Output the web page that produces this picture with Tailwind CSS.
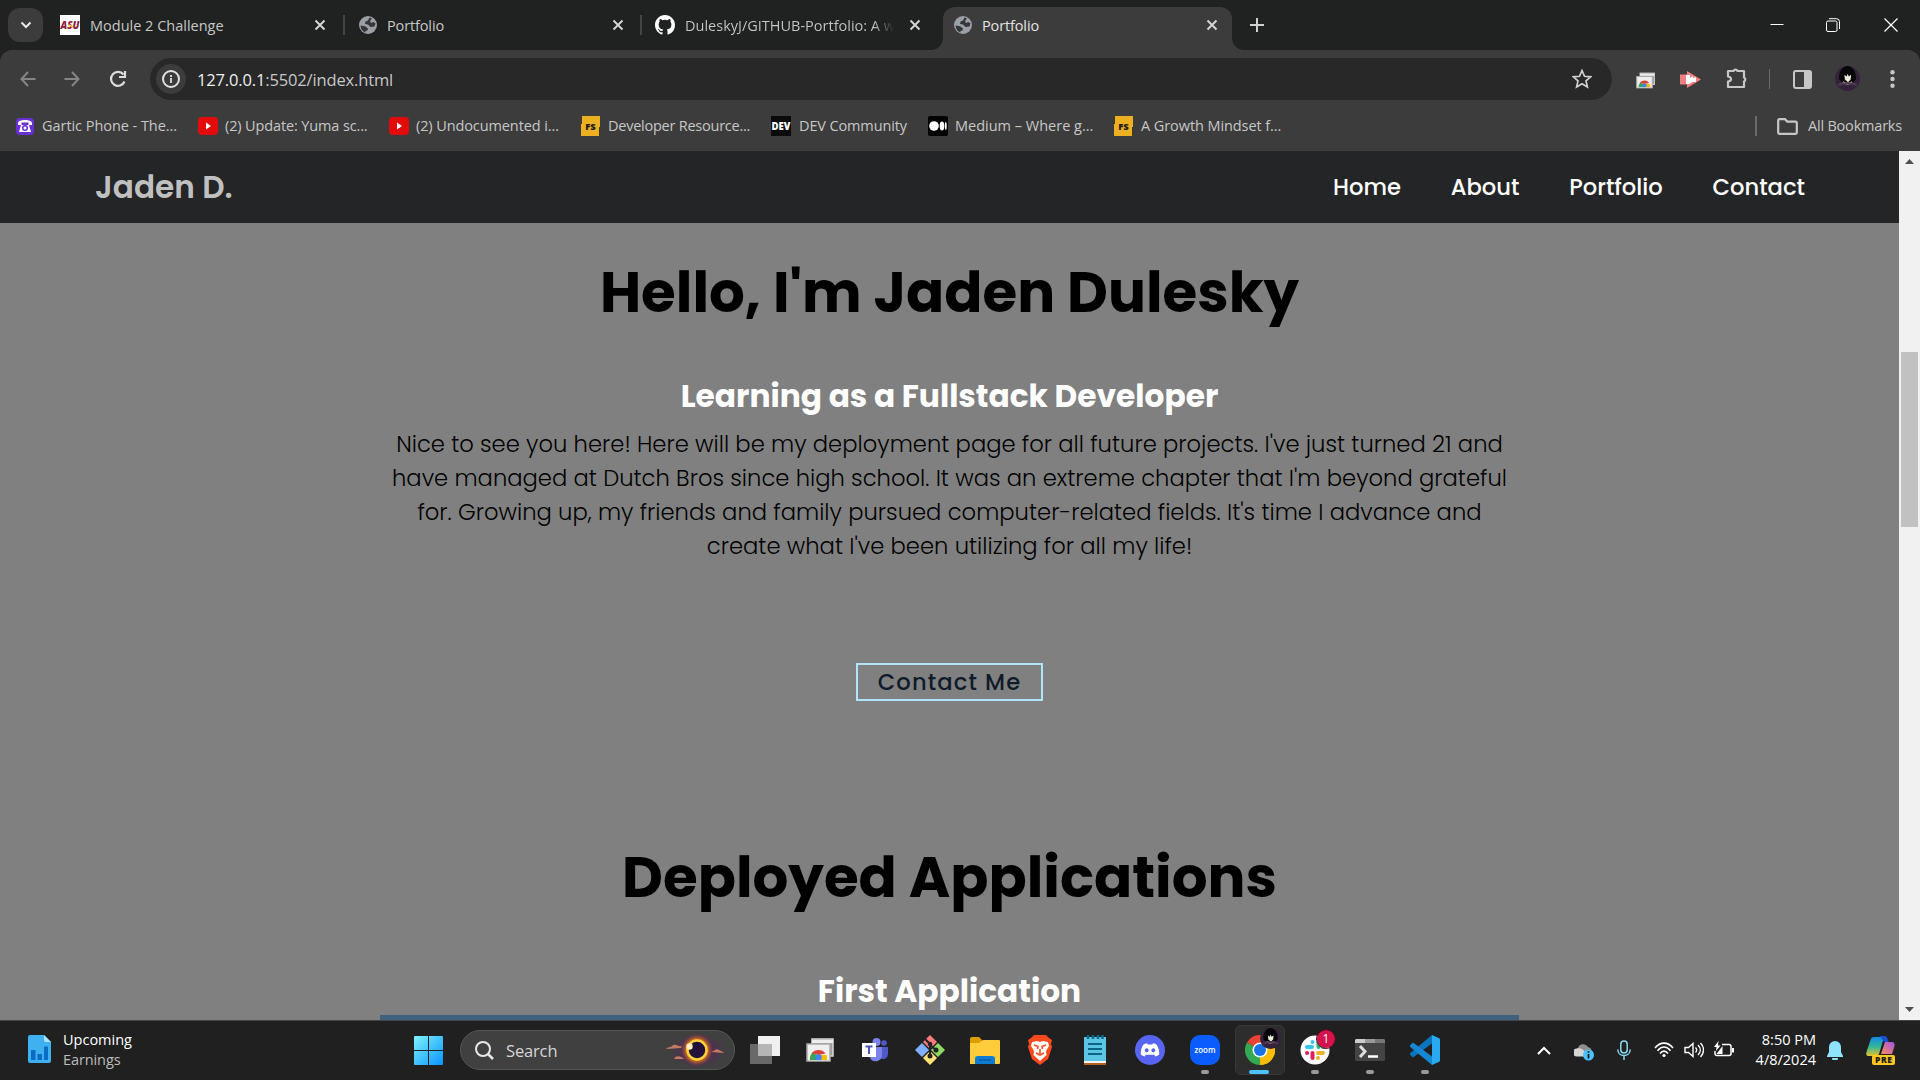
<!DOCTYPE html>
<html lang="en">
<head>
<meta charset="utf-8">
<title>Portfolio</title>
<script src="https://cdn.jsdelivr.net/npm/@tailwindcss/browser@4"></script>
</head>
<body class="w-[1920px] h-[1080px] overflow-hidden flex flex-col bg-[#202221] font-['Segoe_UI','Open_Sans',sans-serif] text-[14.5px] text-[#c7c7c7] whitespace-nowrap">
<svg class="absolute w-0 h-0">
  <defs>
    <linearGradient id="win" gradientUnits="userSpaceOnUse" x1="0" y1="0" x2="29" y2="29"><stop offset="0" stop-color="#7df3ff"/><stop offset="1" stop-color="#0a93ff"/></linearGradient>
    <symbol id="x" viewBox="0 0 12 12"><path d="M1.500 1.500l9 9m0-9l-9 9" stroke="#d6d6d6" stroke-width="1.900" fill="none"/></symbol>
    <symbol id="globe" viewBox="0 0 18 18"><circle cx="9" cy="9" r="9" fill="#9aa0a6"/><path d="M10.500 1.500L9 4.500 6.500 5.500 6 8l3 .5 2.500 2.500 4-.5 1-3-2-1.500L12 7l-1-2 2-2.500zM1.600 9.500l4.400.8 3 2.200-.5 2-2 .5v1.500C3.500 15.500 1.600 13 1.600 9.500z" fill="#35373a"/></symbol>
    <symbol id="yt" viewBox="0 0 20 18"><rect width="20" height="18" rx="4" fill="#e20a0a"/><path d="M8 5.500l5 3.500-5 3.500z" fill="#fff"/></symbol>
    <symbol id="fs" viewBox="0 0 19 20"><path d="M0 0h19v20H0z" fill="#eeb023"/><path d="M.3 0v8M18.700 11v9" stroke="#1b1b1b"/><text x="9.500" y="13.500" font-family="Open Sans" font-weight="800" font-size="9.500" text-anchor="middle" fill="#1b1b1b">FS</text></symbol>
    <symbol id="avatar" viewBox="0 0 24 24"><circle cx="12" cy="12" r="12" fill="#33223a"/><path d="M4 13C3 5 8 0 12 0s9 5 8 13l-3 3H8z" fill="#060508"/><path d="M9 8.500l2.200 1.500 1-2.500 1 2.500 2.300-1.500-.5 4.500-2.500 2.500-3-2.500z" fill="#f0ecdb"/><path d="M7.500 15.500c3 2 6 2 9 0" stroke="#a19a7d" stroke-width="1.800" fill="none"/><path d="M3 18c5-2 13-2 18 0" stroke="#533a5a" stroke-width="2" fill="none"/></symbol>
    <symbol id="chrome" viewBox="0 0 30 30"><path d="M15 15L2 7.500A15 15 0 0 1 28 7.500z" fill="#ea4335"/><path d="M15 15l13-7.500A15 15 0 0 1 15 30z" fill="#fbbc04"/><path d="M15 15v15A15 15 0 0 1 2 7.500z" fill="#34a853"/><path d="M15 7.500h13A15 15 0 0 1 15 30l6.500-11.200z" fill="#fbbc04"/><circle cx="15" cy="15" r="7.500" fill="#fff"/><circle cx="15" cy="15" r="6" fill="#1a73e8"/></symbol>
    <symbol id="windows" viewBox="0 0 28 24"><path d="M6 1h21v17H6z" fill="#9a9a9a" stroke="#d9d9d9" stroke-width="1.500"/><path d="M6 2h21v3H6z" fill="#eee"/><path d="M1 6h23v17H1z" fill="#efefef" stroke="#aaa" stroke-width="1.500"/><path d="M4 22a9 9 0 0 1 2.500-7.500L12 18v4z" fill="#34a853"/><path d="M5.500 15.500a8.600 8.600 0 0 1 14 0l-7 1.500z" fill="#db4437"/><path d="M12 22v-5h8.500a9 9 0 0 1 .5 5z" fill="#fbbc04"/><circle cx="12.500" cy="19.500" r="3.200" fill="#4285f4"/><path d="M2 22h22v1H2z" fill="#ccc"/></symbol>
  </defs>
</svg>

<!-- Tab strip -->
<header class="h-[50px] shrink-0 flex items-end">
  <div class="w-[943px] h-[50px] flex items-center pl-2">
    <button class="w-[35px] h-[34px] rounded-xl bg-[#3c3c3c] flex items-center justify-center"><svg width="12" height="8" viewBox="0 0 12 8"><path d="M1.500 1.500L6 6l4.500-4.500" stroke="#e8e8e8" stroke-width="2" fill="none"/></svg></button>
    <div class="ml-[17px] w-[284px] flex items-center">
      <svg width="20" height="20" viewBox="0 0 20 20"><path d="M0 0h20v20H0z" fill="#fff"/><text x="10" y="14" font-family="Open Sans" font-weight="800" font-style="italic" font-size="10.500" textLength="19" lengthAdjust="spacingAndGlyphs" text-anchor="middle" fill="#8c1d40">ASU</text><path d="M9 10l4 2" stroke="#ffc627" stroke-width="1.500"/></svg>
      <span class="ml-[10px] w-[224px] pt-0.5">Module 2 Challenge</span>
      <svg width="12" height="12"><use href="#x"/></svg>
    </div>
    <div class="w-0.5 h-5 bg-[#454545] -ml-px"></div>
    <div class="ml-[14px] w-[283px] flex items-center">
      <svg width="18" height="18"><use href="#globe"/></svg>
      <span class="ml-[10px] w-[225px] pt-0.5 tracking-[-0.13px]">Portfolio</span>
      <svg width="12" height="12"><use href="#x"/></svg>
    </div>
    <div class="w-0.5 h-5 bg-[#454545] -ml-0.5"></div>
    <div class="ml-[13px] flex items-center">
      <svg width="20" height="20" viewBox="0 0 16 16"><path fill="#fff" d="M8 0C3.580 0 0 3.580 0 8c0 3.540 2.290 6.530 5.470 7.590.4.070.55-.17.55-.38 0-.19-.01-.82-.01-1.490-2.010.37-2.530-.49-2.690-.94-.09-.23-.48-.94-.82-1.130-.28-.15-.68-.52-.01-.53.63-.01 1.080.58 1.230.82.72 1.210 1.870.87 2.330.66.070-.52.28-.87.51-1.070-1.780-.2-3.640-.89-3.640-3.950 0-.87.31-1.590.82-2.150-.08-.2-.36-1.020.08-2.120 0 0 .67-.21 2.200.82a7.600 7.600 0 0 1 4 0c1.530-1.040 2.200-.82 2.200-.82.44 1.100.16 1.920.08 2.120.51.56.82 1.270.82 2.150 0 3.070-1.870 3.750-3.650 3.950.29.25.54.73.54 1.480 0 1.070-.01 1.930-.01 2.200 0 .21.15.46.55.38A8 8 0 0 0 16 8c0-4.420-3.580-8-8-8z"/></svg>
      <span class="ml-[10px] mr-[15px] w-[209px] pt-0.5 overflow-hidden bg-linear-to-r from-[#c7c7c7] from-90% to-transparent bg-clip-text text-transparent">DuleskyJ/GITHUB-Portfolio: A w</span>
      <svg width="12" height="12"><use href="#x"/></svg>
    </div>
  </div>
  <div class="relative w-[289px] h-[43px] rounded-t-xl bg-[#3c3c3c] flex items-center pl-[11px] pb-[7px]">
    <svg class="absolute -left-3 bottom-0" width="12" height="12"><path d="M12 0v12H0A12 12 0 0 0 12 0z" fill="#3c3c3c"/></svg>
    <svg class="absolute -right-3 bottom-0" width="12" height="12"><path d="M0 0v12h12A12 12 0 0 1 0 0z" fill="#3c3c3c"/></svg>
    <svg width="18" height="18"><use href="#globe"/></svg>
    <span class="ml-[10px] w-[224px] pt-0.5 tracking-[-0.13px] text-[#e3e3e3]">Portfolio</span>
    <svg width="12" height="12"><use href="#x"/></svg>
  </div>
  <div class="h-[50px] flex-1 flex items-center pl-[18px]">
    <svg width="14" height="14"><path d="M7 0v14M0 7h14" stroke="#d0d0d0" stroke-width="2"/></svg>
    <svg class="ml-auto" width="14" height="14"><path d="M.5 6.500h13" stroke="#fff"/></svg>
    <svg class="ml-[42px]" width="14" height="14" fill="none" stroke="#fff"><rect x=".5" y="3" width="10.500" height="10.500" rx="1.500"/><path d="M3 .7h7.500a3 3 0 0 1 3 3V11"/></svg>
    <svg class="ml-[44px] mr-[22px]" width="14" height="14"><path d="M.5.5l13 13m0-13l-13 13" stroke="#fff" stroke-width="1.200"/></svg>
  </div>
</header>

<!-- Toolbar -->
<div class="h-[101px] shrink-0 bg-[#3c3c3c] rounded-t-xl">
  <div class="h-[58px] flex items-center">
    <svg class="ml-[20px]" width="16" height="16" fill="none" stroke="#858585" stroke-width="2"><path d="M15.500 8H1.500M8 1L1.500 8 8 15"/></svg>
    <svg class="ml-[28px]" width="16" height="16" fill="none" stroke="#858585" stroke-width="2"><path d="M.5 8h14M8 1l6.500 7L8 15"/></svg>
    <svg class="ml-[29px] mr-[-1px]" width="18" height="18" fill="none" stroke="#dcdcdc" stroke-width="2.200"><path d="M15.500 11.500A7 7 0 1 1 14.500 4.500M16 1v6h-6"/></svg>
    <div class="ml-[24px] w-[1462px] h-[42px] rounded-full bg-[#282828] flex items-center pl-[6px] pr-[20px]">
      <span class="w-[30px] h-[30px] rounded-full bg-[#3c3c3c] flex items-center justify-center"><svg width="18" height="18" fill="none" stroke="#e3e3e3" stroke-width="2"><circle cx="9" cy="9" r="8"/><path d="M9 8v5M9 5v2" stroke-width="1.800"/></svg></span>
      <span class="ml-[11px] pt-[3px] text-[16.5px] tracking-[-0.15px]"><span class="text-[#eee]">127.0.0.1</span>:5502/index.html</span>
      <svg class="ml-auto" width="20" height="20" viewBox="0 0 20 20"><path d="M10 1.500l2.500 5.800 6.200.5-4.700 4.100 1.400 6.200-5.400-3.300-5.400 3.300L6 11.900 1.300 7.800l6.200-.5z" fill="none" stroke="#d0d0d0" stroke-width="1.700"/></svg>
    </div>
    <svg class="ml-[24px] mt-0.5" width="19" height="17" viewBox="0 0 28 24"><use href="#windows"/></svg>
    <svg class="ml-[25px]" width="21" height="17" viewBox="0 0 21 17"><path d="M0 3.500h7V0l14 8.500L7 17v-3.500H0z" fill="#ee7f80"/><path d="M6 4h4v3l3-2v2l3-1v5h-3l-3 1v1H6z" fill="#fff"/></svg>
    <svg class="ml-[25px] -mt-0.5" width="22" height="22" viewBox="0 0 22 22"><path d="M2 4h5.500a2.200 2.200 0 0 1 4 0H18v6.500a2.200 2.200 0 0 1 0 4V20H2v-5.500c4-.5 4-4.500 0-5z" fill="none" stroke="#c7c7c7" stroke-width="2.200" stroke-linejoin="round"/></svg>
    <div class="ml-[21px] w-px h-5 bg-[#6a6a6a]"></div>
    <svg class="ml-[23px]" width="19" height="19"><rect x="1" y="1" width="17" height="17" rx="2" fill="none" stroke="#c7c7c7" stroke-width="2"/><path d="M11 1h7v17h-7z" fill="#c7c7c7"/></svg>
    <svg class="ml-[23px] -mt-0.5" width="25" height="25"><use href="#avatar"/></svg>
    <svg class="ml-[30px]" width="5" height="18" fill="#c7c7c7"><circle cx="2.500" cy="2.300" r="2.200"/><circle cx="2.500" cy="9" r="2.200"/><circle cx="2.500" cy="15.800" r="2.200"/></svg>
  </div>
  <div class="h-9 flex items-center pl-4">
    <svg width="18" height="18" viewBox="0 0 18 18"><rect x="0" y="1" width="18" height="17" rx="4" fill="#6b2fd6"/><path d="M2 6c0-4 14-4 14 0v2h-3.500V5.500h-7V8H2zM5 8h8l2 7H3z" fill="#fff"/><circle cx="9" cy="11" r="2.300" fill="#fff" stroke="#6b2fd6" stroke-width="1.500"/></svg>
    <span class="ml-2 w-[156px] tracking-[-0.05px]">Gartic Phone - The...</span>
    <svg width="20" height="18"><use href="#yt"/></svg>
    <span class="ml-[7px] w-[164px] tracking-[-0.13px]">(2) Update: Yuma sc...</span>
    <svg width="20" height="18"><use href="#yt"/></svg>
    <span class="ml-[7px] w-[165px] tracking-[-0.1px]">(2) Undocumented i...</span>
    <svg width="19" height="20"><use href="#fs"/></svg>
    <span class="ml-2 w-[163px] tracking-[-0.24px]">Developer Resource...</span>
    <svg width="20" height="20"><path d="M0 0h20v20H0z" fill="#0a0a0a"/><text x="10" y="14" font-family="Open Sans" font-weight="800" font-size="10.500" textLength="19" lengthAdjust="spacingAndGlyphs" text-anchor="middle" fill="#fff">DEV</text></svg>
    <span class="ml-2 w-[129px] tracking-[-0.13px]">DEV Community</span>
    <svg width="20" height="20"><rect width="20" height="20" rx="2"/><circle cx="6" cy="10" r="4.800" fill="#fff"/><ellipse cx="14" cy="10" rx="2.300" ry="4.500" fill="#fff"/><ellipse cx="17.800" cy="10" rx=".9" ry="4" fill="#fff"/></svg>
    <span class="ml-[7px] w-[159px]">Medium – Where g...</span>
    <svg width="19" height="20"><use href="#fs"/></svg>
    <span class="ml-2 tracking-[-0.08px]">A Growth Mindset f...</span>
    <div class="ml-auto w-0.5 h-5 bg-[#6a6a6a]"></div>
    <svg class="ml-[20px]" width="21" height="17"><path d="M1.200 2.500a1.300 1.300 0 0 1 1.300-1.300H8l2.300 2.500h8.200A1.300 1.300 0 0 1 19.800 5v9.500a1.300 1.300 0 0 1-1.300 1.300h-16a1.300 1.300 0 0 1-1.300-1.300z" fill="none" stroke="#c7c7c7" stroke-width="2.200"/></svg>
    <span class="ml-[10px] mr-[18px] tracking-[-0.2px]">All Bookmarks</span>
  </div>
</div>

<!-- Page -->
<div class="h-[869px] shrink-0 flex font-['Poppins','Inter',sans-serif]">
  <main class="w-[1899px] h-full bg-[#808080] overflow-hidden flex flex-col items-center">
    <nav class="w-full h-[72px] shrink-0 bg-[#242526] flex items-center pt-px pl-[95px] pr-[94px] text-[22.67px] font-medium text-white">
      <a class="text-[31.17px] leading-[71px] font-semibold text-[#c0c0c0]">Jaden D.</a>
      <ul class="ml-auto flex gap-[49.8px] leading-[71px]">
        <li>Home</li>
        <li>About</li>
        <li>Portfolio</li>
        <li>Contact</li>
      </ul>
    </nav>
    <h1 class="mt-[28px] h-[84px] shrink-0 leading-[84px] text-[56.3px] font-bold text-black">Hello, I'm Jaden Dulesky</h1>
    <h2 class="mt-[37px] h-[48px] shrink-0 leading-[48px] text-[31.25px] font-bold text-white">Learning as a Fullstack Developer</h2>
    <p class="mt-[7px] w-[1139px] h-[136px] shrink-0 whitespace-normal text-center text-[22.67px] leading-[34px] font-light tracking-[0.02px] text-black">Nice to see you here! Here will be my deployment page for all future projects. I've just turned 21 and have managed at Dutch Bros since high school. It was an extreme chapter that I'm beyond grateful for. Growing up, my friends and family pursued computer-related fields. It's time I advance and create what I've been utilizing for all my life!</p>
    <a class="mt-[100px] w-[187px] h-[38px] shrink-0 border-2 border-[#aee6f7] text-center text-[22.67px] leading-[34px] font-medium tracking-[1.13px] text-[#0f1b2a]">Contact Me</a>
    <h1 class="mt-[135px] h-[84px] shrink-0 leading-[84px] text-[56.3px] font-bold text-black">Deployed Applications</h1>
    <h2 class="mt-[47px] h-[48px] shrink-0 leading-[48px] text-[31.25px] font-bold text-white">First Application</h2>
    <div class="w-[1139px] flex-1 bg-[#40607f]"></div>
  </main>
  <aside class="w-[21px] h-full bg-[#f1f1f1] flex flex-col items-center py-2">
    <svg width="9" height="5"><path d="M0 5l4.500-5L9 5z" fill="#505050"/></svg>
    <div class="mt-[188px] w-[17px] h-[175px] bg-[#c1c1c1]"></div>
    <svg class="mt-auto" width="9" height="5"><path d="M0 0l4.500 5L9 0z" fill="#505050"/></svg>
  </aside>
</div>

<!-- Taskbar -->
<footer class="h-[60px] shrink-0 bg-[#202020] border-t border-[#484848] flex items-center">
  <svg class="ml-[28px] -mt-[3px]" width="23" height="28"><path d="M2 0h14l7 7v19a2 2 0 0 1-2 2H2a2 2 0 0 1-2-2V2a2 2 0 0 1 2-2z" fill="#3fb1f0"/><path d="M16 0l7 7h-5a2 2 0 0 1-2-2z" fill="#a9e3ff"/><path d="M3 15h4.500v10H3zM9.500 19H14v6H9.500zM16 11.500h4V25h-4z" fill="#0b6cc4"/></svg>
  <div class="ml-[12px] -mt-0.5 w-[351px] leading-5">
    <p class="text-white">Upcoming</p>
    <p class="text-[#bdbdbd] tracking-[-0.1px]">Earnings</p>
  </div>
  <svg width="29" height="29" fill="url(#win)"><path d="M1 0h13v14H0V1a1 1 0 0 1 1-1zM15 0h13a1 1 0 0 1 1 1v13H15zM0 15h14v14H1a1 1 0 0 1-1-1zM15 15h14v13a1 1 0 0 1-1 1H15z"/></svg>
  <div class="ml-[17px] w-[275px] h-10 -mt-px rounded-full bg-[#404040] border border-[#565656] flex items-center pl-[14px] pr-[8px] text-[16.5px] text-[#d6d6d6]">
    <svg width="19" height="19"><circle cx="8" cy="8" r="7" fill="none" stroke="#e8e8e8" stroke-width="2"/><path d="M13 13l5 5" stroke="#e8e8e8" stroke-width="2.500"/></svg>
    <span class="ml-[12px] pt-0.5 tracking-[-0.15px]">Search</span>
    <svg class="ml-auto" width="60" height="36" viewBox="0 0 60 36">
      <defs><radialGradient id="glow"><stop offset=".45" stop-color="#ffa31a"/><stop offset=".7" stop-color="#c8641e" stop-opacity=".8"/><stop offset="1" stop-color="#5b2266" stop-opacity="0"/></radialGradient><radialGradient id="haze"><stop offset="0" stop-color="#5b1f63"/><stop offset="1" stop-color="#5b1f63" stop-opacity="0"/></radialGradient></defs>
      <ellipse cx="32" cy="19" rx="28" ry="17" fill="url(#haze)"/><circle cx="31" cy="18" r="17" fill="url(#glow)"/><circle cx="31" cy="18" r="9.500" fill="#22123a" stroke="#ffd23c" stroke-width="2.500"/><circle cx="23.500" cy="14.500" r="3.200" fill="#fff0c0"/>
      <path d="M0 17c3-3 5-1 7-4 4-1 5 2 9 1l-1 2zM8 27c2-4 7-3 10 0zM45 20c4-1 5-4 8-2s4 1 5 3z" fill="#c47a62"/>
    </svg>
  </div>
  <div class="ml-[2px] -mt-px flex items-center">
    <div class="w-[55px] flex justify-center"><svg width="30" height="28"><rect x="8" width="22" height="20" fill="#f0f0f0"/><rect y="8" width="22" height="20" fill="#777" fill-opacity=".85"/><path d="M8 8h14v12H8z" fill="#b5b5b5"/></svg></div>
    <div class="w-[55px] flex justify-center"><svg width="28" height="24"><use href="#windows"/></svg></div>
    <div class="w-[55px] flex justify-center"><svg width="26" height="24"><circle cx="22" cy="5" r="2.800" fill="#5059c9"/><circle cx="14.500" cy="4" r="4" fill="#7b83eb"/><path d="M18 9h8v7a5 5 0 0 1-8 4z" fill="#5059c9"/><path d="M8 9h12v9a6.500 6.500 0 0 1-12 2z" fill="#7b83eb"/><rect y="5" width="14" height="14" fill="#fff"/><path d="M3.500 8.500h7M7 8.500V16" stroke="#4b53bc" stroke-width="2"/></svg></div>
    <div class="w-[55px] flex justify-center"><svg width="30" height="30"><path d="M15 0l7 7-7 7-7-7z" fill="#f97b7b"/><path d="M7 8l7 7-7 7-7-7z" fill="#7fb0ff"/><path d="M23 8l7 7-7 7-7-7z" fill="#8fd866"/><path d="M15 16l7 7-7 7-7-7z" fill="#ffe27a"/><path d="M10 4l5 5v12M15 10l6 5" stroke="#222" stroke-width="2" fill="none"/><circle cx="15" cy="9" r="2.300" fill="#222"/><circle cx="21" cy="15" r="2.500" fill="#222"/><circle cx="15" cy="21" r="2.500" fill="#222"/></svg></div>
    <div class="w-[55px] flex justify-center"><svg width="30" height="27"><path d="M0 2a2 2 0 0 1 2-2h7l3 3v3H0z" fill="#dd9c00"/><path d="M0 6h9l4-3h16a1 1 0 0 1 1 1v22a1 1 0 0 1-1 1H0z" fill="#ffcd3c"/><path d="M5 27v-5a3 3 0 0 1 3-3h14a3 3 0 0 1 3 3v5z" fill="#0f7bd3"/><path d="M9 23h12" stroke="#0a4f92"/></svg></div>
    <div class="w-[55px] flex justify-center"><svg width="26" height="30"><path d="M7 0h12l3 3 3 2-1 4 1 3-4 12-8 6-8-6L1 12l1-3-1-4 3-2z" fill="#fb4a1e"/><path d="M5 7l5-1 3 1 3-1 5 1 1 4-3 5 .5 4L13 26l-6.500-6 .5-4-3-5z" fill="#fff"/><path d="M7 10l4 1.500-.5 2.500M19 10l-4 1.500.5 2.500M9 18l4 2 4-2M13 14v6" stroke="#fb4a1e" stroke-width="1.600" fill="none"/></svg></div>
    <div class="w-[55px] flex justify-center"><svg width="22" height="30"><path d="M0 2h22v25H0z" fill="#5cc5e4"/><path d="M0 26h22v2H0z" fill="#f3f3f3"/><path d="M0 28h22v2H0z" fill="#b5611e"/><path d="M4 0v4M9 0v4M14 0v4M18.500 0v4" stroke="#0a6c8c" stroke-width="2.500"/><path d="M4 9h14M4 14h14M4 19h14" stroke="#0a6484" stroke-width="1.800"/></svg></div>
    <div class="w-[55px] flex justify-center"><svg width="30" height="30"><circle cx="15" cy="15" r="15" fill="#5865f2"/><path d="M10.500 8.500l1.500-.3.800 1.300h4.400l.8-1.300 1.500.3 2 1c2 3 3 6.500 2.700 10-1.200 1-2.500 1.600-3.900 2l-1-1.700h-8.600l-1 1.700c-1.400-.4-2.700-1-3.900-2-.3-3.500.7-7 2.700-10z" fill="#fff"/><ellipse cx="11.700" cy="15.300" rx="1.900" ry="2.100" fill="#5865f2"/><ellipse cx="18.300" cy="15.300" rx="1.900" ry="2.100" fill="#5865f2"/></svg></div>
    <div class="relative w-[55px] flex justify-center"><svg width="30" height="30"><rect width="30" height="30" rx="10" fill="#0b5cff"/><text x="15" y="18" font-family="Open Sans" font-weight="600" font-size="9" textLength="21" lengthAdjust="spacingAndGlyphs" text-anchor="middle" fill="#fff">zoom</text></svg><i class="absolute left-[24px] -bottom-[9px] w-2 h-1 rounded-full bg-[#9a9a9a]"></i></div>
    <div class="relative w-[55px] flex justify-center"><div class="w-[50px] h-[50px] rounded-md bg-[#2d2d2d] border border-[#383838] flex items-center justify-center"><svg width="30" height="30"><use href="#chrome"/></svg></div><svg class="absolute left-[28px] top-[3px]" width="21" height="21"><use href="#avatar"/></svg><i class="absolute left-[17px] bottom-[1px] w-5 h-1 rounded-full bg-[#4cc2ff]"></i></div>
    <div class="relative w-[55px] flex justify-center"><svg width="30" height="30"><circle cx="15" cy="15" r="14.500" fill="#fff"/><g fill="none" stroke-width="4" stroke-linecap="round"><path d="M7 12h5M12.500 7v.1" stroke="#36c5f0"/><path d="M18.500 7v5M23 12h.1" stroke="#2eb67d"/><path d="M18 18h5M18 23v.1" stroke="#ecb22e"/><path d="M12.500 18v5M7 18h.1" stroke="#e01e5a"/></g></svg><span class="absolute left-[30px] -top-[5px] w-[18px] h-[18px] rounded-full bg-[#d7134c] outline outline-[#5c0a25] text-white text-[12px] leading-[18px] text-center">1</span><i class="absolute left-[24px] -bottom-[9px] w-2 h-1 rounded-full bg-[#9a9a9a]"></i></div>
    <div class="relative w-[55px] h-[30px] flex items-center justify-center"><svg width="30" height="22"><rect width="30" height="22" rx="1.500" fill="#444"/><path d="M1 0h19v4H0V1z" fill="#ccc"/><path d="M10 0h10v4H10z" fill="#999"/><path d="M20 0h9l1 1v3H20z" fill="#777"/><path d="M5 7l5 5.500L5 18" stroke="#ddd" stroke-width="3" fill="none"/><path d="M13 17.500h10" stroke="#fff" stroke-width="2.500"/></svg><i class="absolute left-[24px] -bottom-[9px] w-2 h-1 rounded-full bg-[#9a9a9a]"></i></div>
    <div class="relative w-[55px] flex justify-center"><svg width="30" height="30" viewBox="0 0 30 30"><path d="M22 0v8.500L3 22.500l-3-2.700v-1.600z" fill="#0c73bd"/><path d="M22 30v-8.500L3 7.500l-3 2.700v1.600z" fill="#1687d2"/><path d="M22 0l7.200 3.300a1.500 1.500 0 0 1 .8 1.400v20.600a1.500 1.500 0 0 1-.8 1.400L22 30z" fill="#29a9f2"/></svg><i class="absolute left-[24px] -bottom-[9px] w-2 h-1 rounded-full bg-[#9a9a9a]"></i></div>
  </div>
  <div class="ml-auto -mt-px flex items-center">
    <svg width="14" height="9"><path d="M1 8l6-6 6 6" stroke="#fff" stroke-width="2" fill="none"/></svg>
    <svg class="ml-[23px] mt-1" width="20" height="18"><path d="M3 12a4 4 0 0 1 1-7 5.500 5.500 0 0 1 10-1 4.500 4.500 0 0 1 2 8z" fill="#8f8f8f"/><path d="M3 13.500a4 4 0 0 1 0-8c3-1 5 0 8 3v5z" fill="#d5d5d5"/><circle cx="14.500" cy="12" r="5.500" fill="#4cc2ff"/><path d="M14.500 11v4.500M14.500 8.200v1.600" stroke="#111" stroke-width="1.700"/></svg>
    <svg class="ml-[23px]" width="14" height="20" fill="none" stroke="#8ad7ee" stroke-width="1.500"><rect x="3.800" y="1" width="6.400" height="12" rx="3.200"/><path d="M.8 9.500c0 8 12.400 8 12.400 0M7 15.500V20"/></svg>
    <svg class="ml-[23px]" width="20" height="16" fill="none" stroke="#fff" stroke-width="1.600"><path d="M1 6c5-6.500 13-6.500 18 0M3.500 8.800c4-5 9-5 13 0M6 11.500c2.500-3.200 5.500-3.200 8 0"/><circle cx="10" cy="13.500" r="1.600" fill="#fff" stroke="none"/></svg>
    <svg class="ml-[10px]" width="20" height="16" fill="none" stroke="#fff" stroke-width="1.400"><path d="M1 5.500h3.500L9 1.500v13l-4.500-4H1zM11.500 5.500c1.500 1.500 1.500 3.500 0 5M14 3c3 3 3 7 0 10M16.500 1c4 4 4 10 0 14"/></svg>
    <svg class="ml-[10px] -mt-0.5" width="20" height="17" fill="none" stroke="#fff" stroke-width="1.500"><path d="M8 3.500h7a2 2 0 0 1 2 2v7a2 2 0 0 1-2 2H3a2 2 0 0 1-2-2V10"/><path d="M2.500 13l6-8v8z" fill="#fff" stroke="none"/><path d="M4.500 0L0 6h2.500L2 10l4.500-5.500H4z" fill="#fff" stroke="none"/><path d="M19 7v4.500" stroke-width="2"/></svg>
    <div class="ml-[21px] -mt-px w-[61px] text-right leading-5 text-white">
      <p>8:50 PM</p><p>4/8/2024</p>
    </div>
    <svg class="ml-[11px]" width="16" height="19"><path d="M8 0a6 6 0 0 1 6 6v5l2 4v1H0v-1l2-4V6a6 6 0 0 1 6-6zM5 17h6a3 3 0 0 1-6 0z" fill="#8fe3fb"/></svg>
    <svg class="ml-[23px] mr-[25px]" width="29" height="29"><defs><linearGradient id="ca" x1="0" y1="0" x2="0" y2="1"><stop offset="0" stop-color="#1686e8"/><stop offset=".5" stop-color="#2fb69b"/><stop offset="1" stop-color="#e8c42c"/></linearGradient><linearGradient id="cb" x1="1" y1="0" x2="0" y2="1"><stop offset="0" stop-color="#a152e8"/><stop offset="1" stop-color="#ff8a5c"/></linearGradient></defs><path d="M8 1h10l-5 17a3 3 0 0 1-3 2H3c-3 0-3-2-2.500-4l4-12c.5-2 1.500-3 3.500-3z" fill="url(#ca)"/><path d="M14 0h5c2 0 2.500 2 3.500 6H18z" fill="#1a4fd0"/><path d="M19 6h7c2 0 3 2 2.500 4L26 18H15z" fill="url(#cb)"/><rect x="6" y="19" width="23" height="10" rx="2" fill="#ffc81f"/><text x="17.500" y="27" font-family="Open Sans" font-weight="800" font-size="8.500" textLength="17" text-anchor="middle" fill="#1b1b1b">PRE</text></svg>
  </div>
</footer>
</body>
</html>
